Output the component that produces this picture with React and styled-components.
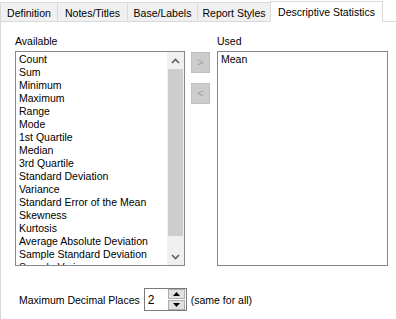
import styled, {createGlobalStyle} from "styled-components";

const GlobalStyle = createGlobalStyle`
  body {
    margin: 0;
    background: #ffffff;
    font-family: "Liberation Sans", Arial, sans-serif;
    font-size: 10.5px;
    color: #000000;
  }
`;

const available = [
  "Count",
  "Sum",
  "Minimum",
  "Maximum",
  "Range",
  "Mode",
  "1st Quartile",
  "Median",
  "3rd Quartile",
  "Standard Deviation",
  "Variance",
  "Standard Error of the Mean",
  "Skewness",
  "Kurtosis",
  "Average Absolute Deviation",
  "Sample Standard Deviation",
  "Sample Variance",
];

const tabs = [
  {label: "Definition", width: 58},
  {label: "Notes/Titles", width: 71},
  {label: "Base/Labels", width: 71},
  {label: "Report Styles", width: 74},
  {label: "Descriptive Statistics", width: 113, active: true},
];

export default function App() {
  return (
    <>
      <GlobalStyle />
      <Window>
        <TabBar>
          {tabs.map(tab => (
            <Tab key={tab.label} $active={tab.active} $width={tab.width}>
              {tab.label}
            </Tab>
          ))}
          <TabFiller />
        </TabBar>
        <Panel>
          <Lists>
            <Column $width={170}>
              <Label>Available</Label>
              <ListBox>
                <Items>
                  {available.map(item => (
                    <Item key={item}>{item}</Item>
                  ))}
                </Items>
                <ScrollBar>
                  <ArrowButton>
                    <svg width="9" height="6" viewBox="0 0 9 6">
                      <path d="M1 5 L4.5 1.5 L8 5" fill="none" stroke="#606060" strokeWidth="1.6" />
                    </svg>
                  </ArrowButton>
                  <Thumb />
                  <Track />
                  <ArrowButton>
                    <svg width="9" height="6" viewBox="0 0 9 6">
                      <path d="M1 1 L4.5 4.5 L8 1" fill="none" stroke="#606060" strokeWidth="1.6" />
                    </svg>
                  </ArrowButton>
                </ScrollBar>
              </ListBox>
            </Column>
            <MoveButtons>
              <MoveButton disabled>&gt;</MoveButton>
              <MoveButton disabled>&lt;</MoveButton>
            </MoveButtons>
            <Column $width={171}>
              <Label>Used</Label>
              <ListBox>
                <Items>
                  <Item>Mean</Item>
                </Items>
              </ListBox>
            </Column>
          </Lists>
          <DecimalRow>
            <span>Maximum Decimal Places</span>
            <Spinner>
              <SpinValue>2</SpinValue>
              <SpinButtons>
                <SpinButton>
                  <svg width="7" height="4" viewBox="0 0 7 4">
                    <path d="M0 4 L3.5 0 L7 4 Z" fill="#000" />
                  </svg>
                </SpinButton>
                <SpinButton>
                  <svg width="7" height="4" viewBox="0 0 7 4">
                    <path d="M0 0 L3.5 4 L7 0 Z" fill="#000" />
                  </svg>
                </SpinButton>
              </SpinButtons>
            </Spinner>
            <span>(same for all)</span>
          </DecimalRow>
        </Panel>
      </Window>
    </>
  );
}

const Window = styled.div`
  width: 396px;
  height: 319px;
  display: flex;
  flex-direction: column;
  overflow: hidden;
`;

const TabBar = styled.div`
  display: flex;
  align-items: flex-end;
  height: 21px;
  position: relative;
  z-index: 1;
`;

const Tab = styled.div`
  box-sizing: border-box;
  width: ${p => p.$width}px;
  height: ${p => (p.$active ? "21px" : "19px")};
  margin-left: -1px;
  border: 1px solid #d9d9d9;
  border-bottom: ${p => (p.$active ? "1px solid #ffffff" : "none")};
  background: ${p => (p.$active ? "#ffffff" : "#f0f0f0")};
  display: flex;
  align-items: center;
  justify-content: center;
  padding-top: ${p => (p.$active ? "0" : "2px")};
  white-space: nowrap;
  margin-bottom: ${p => (p.$active ? "-1px" : "0")};
  &:first-child {
    margin-left: 0;
  }
`;

const TabFiller = styled.div`
  flex: 1;
`;

const Panel = styled.div`
  flex: 1;
  border-left: 1px solid #d9d9d9;
  border-top: 1px solid #d9d9d9;
  padding: 13px 0 0 14px;
  display: flex;
  flex-direction: column;
`;

const Lists = styled.div`
  display: flex;
  align-items: flex-start;
`;

const Column = styled.div`
  width: ${p => p.$width}px;
  display: flex;
  flex-direction: column;
`;

const Label = styled.div`
  height: 13px;
  line-height: 13px;
  margin-bottom: 3px;
`;

const ListBox = styled.div`
  box-sizing: border-box;
  height: 215px;
  border: 1px solid #828790;
  background: #ffffff;
  display: flex;
  overflow: hidden;
`;

const Items = styled.div`
  flex: 1;
  padding: 1px 0 0 3px;
  overflow: hidden;
`;

const Item = styled.div`
  height: 13px;
  line-height: 13px;
  white-space: nowrap;
`;

const ScrollBar = styled.div`
  width: 17px;
  background: #f0f0f0;
  display: flex;
  flex-direction: column;
`;

const ArrowButton = styled.div`
  height: 17px;
  display: flex;
  align-items: center;
  justify-content: center;
`;

const Thumb = styled.div`
  height: 167px;
  margin: 0 1px;
  background: #cdcdcd;
`;

const Track = styled.div`
  flex: 1;
`;

const MoveButtons = styled.div`
  width: 19px;
  margin: 17px 7px 0 6px;
  display: flex;
  flex-direction: column;
  gap: 10px;
`;

const MoveButton = styled.button`
  box-sizing: border-box;
  width: 19px;
  height: 21px;
  padding: 0;
  border: 1px solid #bfbfbf;
  background: #cccccc;
  color: #a0a0a0;
  font-family: "Liberation Sans", Arial, sans-serif;
  font-size: 11px;
  line-height: 1;
`;

const DecimalRow = styled.div`
  display: flex;
  align-items: center;
  gap: 4px;
  margin-top: 22px;
  padding-left: 4px;
`;

const Spinner = styled.div`
  box-sizing: border-box;
  width: 43px;
  height: 23px;
  border: 1px solid #7a7a7a;
  display: flex;
  align-items: center;
  padding: 0 1px 0 3px;
`;

const SpinValue = styled.span`
  flex: 1;
  font-size: 12px;
`;

const SpinButtons = styled.div`
  display: flex;
  flex-direction: column;
  gap: 1px;
`;

const SpinButton = styled.div`
  box-sizing: border-box;
  width: 17px;
  height: 10px;
  border: 1px solid #adadad;
  background: #e1e1e1;
  display: flex;
  align-items: center;
  justify-content: center;
`;
